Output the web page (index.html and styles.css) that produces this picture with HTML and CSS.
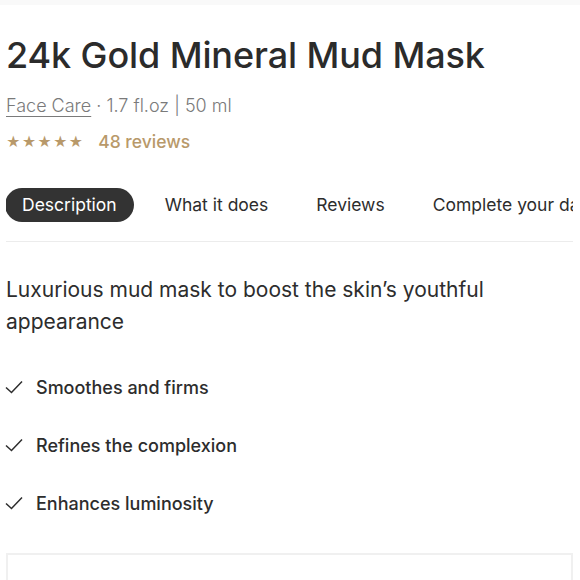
FILE: index.html
```html
<!DOCTYPE html>
<html lang="en">
<head>
<meta charset="utf-8">
<title>24k Gold Mineral Mud Mask</title>
<link rel="stylesheet" href="styles.css">
</head>
<body>
<div class="topbar"></div>
<main class="product">
  <h1 class="title">24k Gold Mineral Mud Mask</h1>
  <p class="meta"><a class="cat" href="#">Face Care</a> · 1.7 fl.oz | 50 ml</p>
  <div class="rating">
    <span class="stars">★★★★★</span>
    <span class="count">48 reviews</span>
  </div>
  <nav class="tabs">
    <span class="tab active">Description</span>
    <span class="tab">What it does</span>
    <span class="tab">Reviews</span>
    <span class="tab">Complete your daily routine</span>
  </nav>
  <p class="lead">Luxurious mud mask to boost the skin’s youthful appearance</p>
  <ul class="checks">
    <li><svg class="ck" viewBox="0 0 18 14" width="18" height="14"><path d="M1 7.5 L6.5 12.5 L17 1.5" fill="none" stroke="#2d2d2d" stroke-width="1.5"/></svg>Smoothes and firms</li>
    <li><svg class="ck" viewBox="0 0 18 14" width="18" height="14"><path d="M1 7.5 L6.5 12.5 L17 1.5" fill="none" stroke="#2d2d2d" stroke-width="1.5"/></svg>Refines the complexion</li>
    <li><svg class="ck" viewBox="0 0 18 14" width="18" height="14"><path d="M1 7.5 L6.5 12.5 L17 1.5" fill="none" stroke="#2d2d2d" stroke-width="1.5"/></svg>Enhances luminosity</li>
  </ul>
  <div class="box"></div>
</main>
</body>
</html>
```
FILE: styles.css
```css
html, body { margin: 0; padding: 0; background: #fff; }
body { font-family: Inter, "Noto Sans", sans-serif; color: #2d2d2d; overflow: hidden; height: 580px; }
.topbar { height: 5px; background: #f9f9f9; }
.product { padding: 0 7px 0 6px; }
.title { margin: 28px 0 0; font-size: 36px; line-height: 44px; font-weight: 500; letter-spacing: -0.1px; color: #2b2b2b; }
.meta { margin: 17px 0 0; font-size: 18px; line-height: 24px; color: #7a7a7a; font-weight: 300; }
.cat { color: #7a7a7a; text-decoration: underline; text-underline-offset: 4px; }
.rating { display: flex; align-items: center; gap: 14px; margin-top: 11px; height: 24px; }
.stars { color: #b8996a; font-size: 14px; letter-spacing: 1px; }
.count { color: #b8996a; font-size: 17.5px; font-weight: 500; }
.tabs { display: flex; gap: 14px; margin-top: 35px; white-space: nowrap; overflow: hidden; border-bottom: 1px solid #ececec; padding-bottom: 19px; }
.tab { padding: 0 17px; height: 34px; line-height: 34px; font-size: 17.5px; border-radius: 17px; color: #2d2d2d; flex: none; }
.tab.active { background: #333; color: #fff; margin-left: -1px; }
.lead { margin: 32px 0 0; font-size: 21px; line-height: 32px; color: #2d2d2d; max-width: 500px; }
.checks { list-style: none; margin: 34px 0 0; padding: 0; }
.checks li { display: flex; align-items: center; gap: 13px; font-size: 18px; font-weight: 500; height: 30px; margin-bottom: 28px; }
.ck { flex: none; margin-left: -1px; }
.box { border: 2px solid #f0f0f0; border-bottom: none; height: 40px; margin-top: 35px; }
```
